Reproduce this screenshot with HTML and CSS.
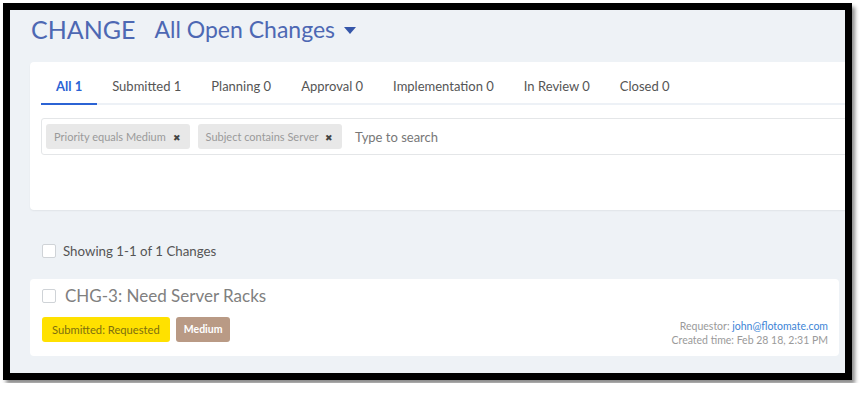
FILE: index.html
```html
<!DOCTYPE html>
<html lang="en">
<head>
    <meta charset="UTF-8">
    <meta name="viewport" content="width=device-width, initial-scale=1.0">
    <title>Change - All Open Changes</title>
    <link rel="stylesheet" href="styles.css">
</head>
<body>
<div class="frame">
    <div class="page">
        <div class="header">
            <h1 class="module">CHANGE</h1>
            <div class="view-picker">
                <span>All Open Changes</span>
                <svg class="caret" width="12" height="7" viewBox="0 0 12 7"><path d="M0 0h12L6 7z" fill="#3556a9"/></svg>
            </div>
        </div>

        <div class="filter-card">
            <div class="tabs">
                <div class="tab active">All 1</div>
                <div class="tab">Submitted 1</div>
                <div class="tab">Planning 0</div>
                <div class="tab">Approval 0</div>
                <div class="tab">Implementation 0</div>
                <div class="tab">In Review 0</div>
                <div class="tab">Closed 0</div>
            </div>
            <div class="search-box">
                <span class="chip">Priority equals Medium <span class="chip-x">&#x2716;</span></span>
                <span class="chip">Subject contains Server <span class="chip-x">&#x2716;</span></span>
                <span class="search-placeholder">Type to search</span>
            </div>
        </div>

        <div class="list-summary">
            <span class="checkbox"></span>
            <span>Showing 1-1 of 1 Changes</span>
        </div>

        <div class="item-card">
            <div class="item-title">
                <span class="checkbox"></span>
                <span>CHG-3: Need Server Racks</span>
            </div>
            <div class="item-bottom">
                <div class="badges">
                    <span class="badge status">Submitted: Requested</span>
                    <span class="badge priority">Medium</span>
                </div>
                <div class="meta">
                    <div>Requestor: <a class="email">john@flotomate.com</a></div>
                    <div>Created time: Feb 28 18, 2:31 PM</div>
                </div>
            </div>
        </div>
    </div>
</div>
</body>
</html>
```

FILE: styles.css
```css
body {
    margin: 0;
    background: #ffffff;
    font-family: Lato, "Open Sans", sans-serif;
}

.frame {
    margin: 3px;
    width: 835px;
    height: 363px;
    border: 7px solid #000;
    box-shadow: 3px 4px 4px rgba(0, 0, 0, 0.45);
}

.page {
    height: 100%;
    background: #eef2f6;
    padding: 0 6px 0 20px;
    box-sizing: border-box;
    overflow: hidden;
}

/* Header */
.header {
    height: 52px;
    padding: 4px 0 0 1px;
    box-sizing: border-box;
    display: flex;
    align-items: flex-start;
    gap: 19px;
    color: #4d68b3;
}

.module {
    margin: 0;
    font-size: 25px;
    font-weight: 400;
    line-height: 30px;
}

.view-picker {
    display: flex;
    align-items: center;
    gap: 9px;
    font-size: 23px;
    line-height: 30px;
}

.caret {
    margin-top: 2px;
}

/* Filter card */
.filter-card {
    background: #fff;
    border-radius: 4px;
    box-shadow: 0 1px 2px rgba(0, 0, 0, 0.06);
    margin-right: -40px;
    padding: 0 11px 55px;
}

.tabs {
    display: flex;
    border-bottom: 2px solid #edf1f6;
}

.tab {
    padding: 15px 15px 8px;
    line-height: 18px;
    font-size: 13px;
    color: #555;
    border-bottom: 2px solid transparent;
    margin-bottom: -2px;
}

.tab.active {
    color: #2b63d4;
    font-weight: 700;
    border-bottom-color: #2b63d4;
}

.search-box {
    margin-top: 13px;
    border: 1px solid #e4e6e8;
    border-radius: 3px;
    padding: 5px 4px;
    display: flex;
    align-items: center;
    gap: 8px;
}

.chip {
    height: 25px;
    line-height: 25px;
    padding: 0 9px 0 8px;
    background: #e8e8e8;
    border-radius: 3px;
    font-size: 11px;
    color: #9a9a9a;
}

.chip-x {
    margin-left: 4px;
    font-size: 9px;
    color: #444;
}

.search-placeholder {
    margin-left: 5px;
    font-size: 13px;
    color: #777;
}

/* List */
.list-summary {
    margin-top: 31px;
    padding-left: 12px;
    height: 20px;
    display: flex;
    align-items: center;
    gap: 7px;
    font-size: 13.3px;
    color: #555;
}

.checkbox {
    width: 12px;
    height: 12px;
    border: 1px solid #cfd3d7;
    border-radius: 2px;
    background: #fff;
    flex-shrink: 0;
}

.item-card {
    margin-top: 18px;
    background: #fff;
    border-radius: 4px;
    padding: 7px 11px 14px 12px;
}

.item-title {
    display: flex;
    align-items: center;
    gap: 9px;
    font-size: 17px;
    line-height: 20px;
    color: #808080;
}

.item-bottom {
    margin-top: 11px;
    height: 25px;
    display: flex;
    justify-content: space-between;
    align-items: flex-start;
}

.badges {
    display: flex;
    gap: 6px;
}

.badge {
    height: 25px;
    line-height: 25px;
    padding: 0 10px;
    border-radius: 3px;
    font-size: 11.2px;
}

.badge.status {
    background: #ffe100;
    color: #7d6f10;
}

.badge.priority {
    padding: 0 8px;
    background: #b99a85;
    color: #fff;
    font-weight: 700;
    font-size: 10.5px;
}

.meta {
    margin-top: 2px;
    text-align: right;
    font-size: 10.5px;
    line-height: 14px;
    color: #9a9a9a;
}

.email {
    color: #3d84d6;
}
```
